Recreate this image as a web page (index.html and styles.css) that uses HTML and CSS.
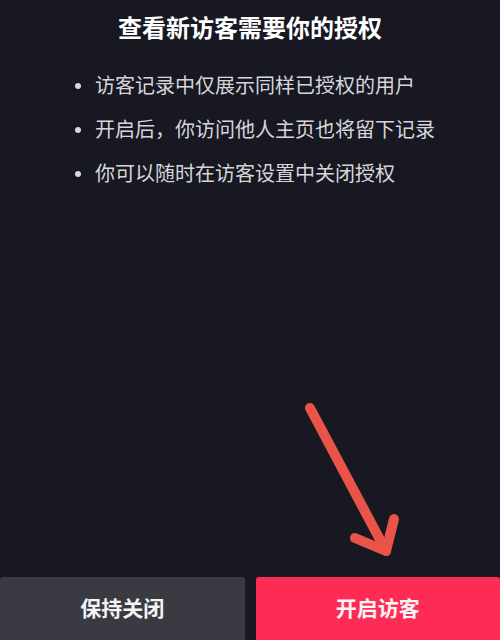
FILE: index.html
```html
<!DOCTYPE html>
<html lang="zh">
<head>
<meta charset="utf-8">
<link rel="stylesheet" href="styles.css">
</head>
<body>
<div class="page">
  <h1 class="title">查看新访客需要你的授权</h1>
  <ul class="points">
    <li>访客记录中仅展示同样已授权的用户</li>
    <li>开启后，你访问他人主页也将留下记录</li>
    <li>你可以随时在访客设置中关闭授权</li>
  </ul>
  <div class="spacer"></div>
  <div class="actions">
    <button class="btn btn-off">保持关闭</button>
    <button class="btn btn-on">开启访客</button>
  </div>
  <svg class="arrow" width="120" height="170" viewBox="0 0 120 170">
    <g fill="none" stroke="#ea5448" stroke-width="10" stroke-linecap="round" stroke-linejoin="round">
      <path d="M10 10 L86 153"/>
      <path d="M55 140 L86 153 L94 121"/>
    </g>
  </svg>
</div>
</body>
</html>
```
FILE: styles.css
```css
html, body {
  margin: 0;
  padding: 0;
  background: #181822;
}
body {
  font-family: "Noto Sans CJK SC", "Noto Sans", sans-serif;
}
.page {
  position: relative;
  width: 500px;
  height: 640px;
  display: flex;
  flex-direction: column;
  overflow: hidden;
}
.title {
  margin: 9px 0 0;
  text-align: center;
  color: #ffffff;
  font-size: 24px;
  font-weight: 700;
  line-height: 36px;
}
.points {
  margin: 25px 0 0;
  padding: 0 0 0 95px;
  list-style: none;
}
.points li {
  position: relative;
  color: #d6d6da;
  font-size: 20px;
  line-height: 30px;
  margin-bottom: 14px;
}
.points li::before {
  content: "";
  position: absolute;
  left: -20px;
  top: 13px;
  width: 6px;
  height: 6px;
  border-radius: 50%;
  background: #d6d6da;
}
.spacer {
  flex: 1;
}
.actions {
  display: flex;
  gap: 11px;
  height: 63px;
}
.btn {
  flex: 1;
  border: none;
  border-radius: 3px 3px 0 0;
  font-family: inherit;
  font-size: 21px;
  font-weight: 700;
  color: #f4f4f6;
  padding: 0 0 4px;
}
.btn-off {
  background: #393a42;
}
.btn-on {
  background: #fe2c55;
}
.arrow {
  position: absolute;
  left: 300px;
  top: 398px;
}
```
